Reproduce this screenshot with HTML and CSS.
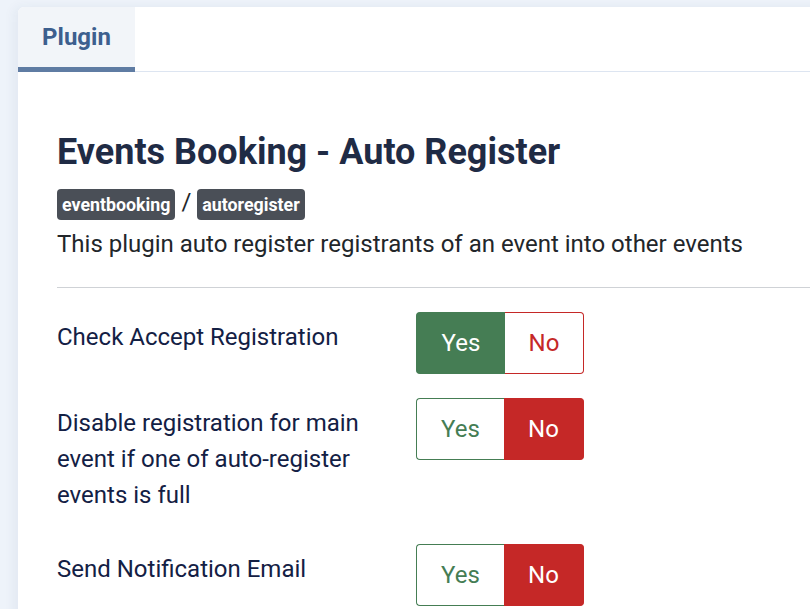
FILE: index.html
```html
<!DOCTYPE html>
<html lang="en">
<head>
<meta charset="utf-8">
<title>Plugin</title>
<link rel="stylesheet" href="styles.css">
</head>
<body>
<div class="card">
  <div class="tabs">
    <div class="tab active">Plugin</div>
  </div>
  <div class="content">
    <h2 class="title">Events Booking - Auto Register</h2>
    <div class="badges">
      <span class="badge">eventbooking</span>
      <span class="sep">/</span>
      <span class="badge">autoregister</span>
    </div>
    <p class="desc">This plugin auto register registrants of an event into other events</p>
    <hr class="divider">
    <div class="row">
      <div class="label">Check Accept Registration</div>
      <div class="toggle">
        <span class="opt yes on">Yes</span>
        <span class="opt no">No</span>
      </div>
    </div>
    <div class="row">
      <div class="label">Disable registration for main event if one of auto-register events is full</div>
      <div class="toggle">
        <span class="opt yes">Yes</span>
        <span class="opt no on">No</span>
      </div>
    </div>
    <div class="row">
      <div class="label">Send Notification Email</div>
      <div class="toggle">
        <span class="opt yes">Yes</span>
        <span class="opt no on">No</span>
      </div>
    </div>
  </div>
</div>
</body>
</html>
```
FILE: styles.css
```css
html, body {
  margin: 0;
  padding: 0;
}
body {
  background: #eef3fa;
  font-family: Roboto, "Liberation Sans", sans-serif;
  color: #22262a;
  padding: 7px 0 0 18px;
  overflow: hidden;
  height: 609px;
  box-sizing: border-box;
}
.card {
  background: #fff;
  border-top-left-radius: 6px;
  box-shadow: -4px 0 12px rgba(30, 60, 110, 0.06);
  min-height: 700px;
  width: 820px;
}
.tabs {
  display: flex;
  border-bottom: 1px solid #dde5f1;
}
.tab {
  width: 117px;
  height: 60px;
  box-sizing: content-box;
  background: #f2f5f9;
  border-bottom: 5px solid #5f7ca3;
  border-top-left-radius: 6px;
  color: #3d5f8e;
  font-weight: 700;
  font-size: 24px;
  display: flex;
  align-items: center;
  justify-content: center;
  margin-bottom: -1px;
}
.content {
  padding: 58px 0 0 39px;
}
.title {
  margin: 0;
  font-size: 36px;
  font-weight: 700;
  color: #1f2b45;
  line-height: 44px;
}
.badges {
  display: flex;
  align-items: center;
  margin-top: 15px;
  gap: 6px;
}
.badge {
  background: #4a4f57;
  color: #fff;
  font-weight: 700;
  font-size: 17.8px;
  border-radius: 4px;
  height: 31px;
  padding: 0 5px;
  display: flex;
  align-items: center;
}
.sep {
  font-size: 24px;
  color: #22262a;
  margin-top: -6px;
}
.desc {
  margin: 6px 0 0;
  font-size: 24px;
  line-height: 36px;
  color: #22262a;
}
.divider {
  border: 0;
  border-top: 1px solid #cfd2d6;
  margin: 25px 0 24px;
}
.row {
  display: flex;
  align-items: flex-start;
  margin-bottom: 24px;
}
.label {
  width: 330px;
  margin-right: 29px;
  padding: 7px 0;
  font-size: 24px;
  line-height: 36px;
  color: #132044;
}
.toggle {
  display: flex;
  height: 62px;
}
.opt {
  display: flex;
  align-items: center;
  justify-content: center;
  font-size: 24px;
  box-sizing: border-box;
  background: #fff;
}
.yes {
  width: 89px;
  color: #457d54;
  border: 1px solid #457d54;
  border-right: 0;
  border-radius: 4px 0 0 4px;
}
.no {
  width: 79px;
  color: #c52827;
  border: 1px solid #c52827;
  border-left: 0;
  border-radius: 0 4px 4px 0;
}
.yes.on {
  background: #457d54;
  color: #fff;
}
.no.on {
  background: #c52827;
  color: #fff;
}
.yes:not(.on) {
  width: 88px;
}
.yes:not(.on) + .no {
  width: 80px;
}
```
